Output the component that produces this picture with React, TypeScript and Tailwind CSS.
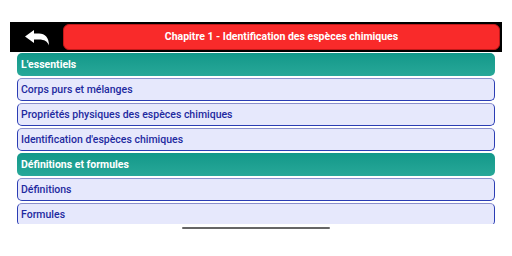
const rows: { label: string; header?: boolean }[] = [
  { label: "L'essentiels", header: true },
  { label: "Corps purs et mélanges" },
  { label: "Propriétés physiques des espèces chimiques" },
  { label: "Identification d'espèces chimiques" },
  { label: "Définitions et formules", header: true },
  { label: "Définitions" },
  { label: "Formules" },
];

function BackArrow() {
  return (
    <svg viewBox="0 0 24 16" className="w-[24px] h-[16px]" fill="white">
      <path d="M0 6.5 L9 0 V3.5 H14 C20 3.5 24 7.5 24 15.5 C22.5 11.5 19.5 9.5 14 9.5 H9 V13 Z" />
    </svg>
  );
}

export default function App() {
  return (
    <div className="w-[512px] h-[256px] bg-white overflow-hidden font-['Roboto',sans-serif]">
      <div className="pt-[22px] pl-[10px]">
        <div className="w-[492px] h-[30px] bg-black flex items-center">
          <div className="w-[53px] flex items-center justify-center pt-[1px]">
            <BackArrow />
          </div>
          <div className="flex-1 h-[26px] mr-[2px] bg-[#f92a2a] rounded-[6px] border border-[#c01818] flex items-center justify-center">
            <span className="text-white font-bold text-[10.5px]">
              Chapitre 1 - Identification des espèces chimiques
            </span>
          </div>
        </div>
      </div>
      <div className="ml-[17px] mt-[1px] w-[478px] h-[171px] overflow-hidden flex flex-col gap-[2px]">
        {rows.map((r) =>
          r.header ? (
            <div
              key={r.label}
              className="shrink-0 h-[23px] rounded-[5px] bg-gradient-to-b from-[#12988a] to-[#27a898] flex items-center pl-[4px] pt-[1px]"
            >
              <span className="text-white font-bold text-[10.5px]">{r.label}</span>
            </div>
          ) : (
            <div
              key={r.label}
              className="shrink-0 h-[23px] rounded-[5px] bg-[#e6e8fc] border-[1.5px] border-[#2b3db4] border-t-[#8a8fcc] flex items-center pl-[3px] pt-[1px]"
            >
              <span className="text-[#1e2aa0] font-medium text-[10.5px]">{r.label}</span>
            </div>
          )
        )}
      </div>
      <div className="ml-[182px] mt-[3px] w-[148px] h-[2px] bg-[#666666] rounded-full" />
    </div>
  );
}
